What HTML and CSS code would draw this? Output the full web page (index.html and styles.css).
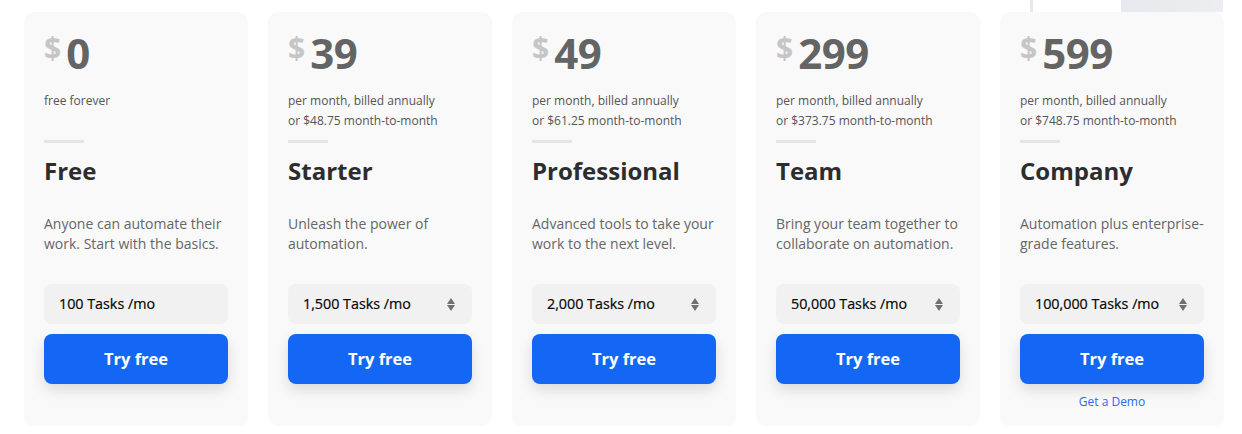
FILE: index.html
```html
<!DOCTYPE html>
<html lang="en">
<head>
<meta charset="utf-8">
<title>Pricing</title>
<link rel="stylesheet" href="styles.css">
</head>
<body>
<div class="page">
  <div class="deco-line"></div>
  <div class="deco-block"></div>
  <div class="plans">
    <div class="card">
      <div class="price"><span class="cur">$</span><span class="amt">0</span></div>
      <div class="billing">free forever</div>
      <div class="rule"></div>
      <h2 class="name">Free</h2>
      <p class="desc">Anyone can automate their work. Start with the basics.</p>
      <div class="select"><span>100 Tasks /mo</span></div>
      <a class="btn">Try free</a>
    </div>
    <div class="card">
      <div class="price"><span class="cur">$</span><span class="amt">39</span></div>
      <div class="billing">per month, billed annually<br>or $48.75 month-to-month</div>
      <div class="rule"></div>
      <h2 class="name">Starter</h2>
      <p class="desc">Unleash the power of automation.</p>
      <div class="select"><span>1,500 Tasks /mo</span><i class="arrows"></i></div>
      <a class="btn">Try free</a>
    </div>
    <div class="card">
      <div class="price"><span class="cur">$</span><span class="amt">49</span></div>
      <div class="billing">per month, billed annually<br>or $61.25 month-to-month</div>
      <div class="rule"></div>
      <h2 class="name">Professional</h2>
      <p class="desc">Advanced tools to take your work to the next level.</p>
      <div class="select"><span>2,000 Tasks /mo</span><i class="arrows"></i></div>
      <a class="btn">Try free</a>
    </div>
    <div class="card">
      <div class="price"><span class="cur">$</span><span class="amt">299</span></div>
      <div class="billing">per month, billed annually<br>or $373.75 month-to-month</div>
      <div class="rule"></div>
      <h2 class="name">Team</h2>
      <p class="desc">Bring your team together to collaborate on automation.</p>
      <div class="select"><span>50,000 Tasks /mo</span><i class="arrows"></i></div>
      <a class="btn">Try free</a>
    </div>
    <div class="card">
      <div class="price"><span class="cur">$</span><span class="amt">599</span></div>
      <div class="billing">per month, billed annually<br>or $748.75 month-to-month</div>
      <div class="rule"></div>
      <h2 class="name">Company</h2>
      <p class="desc">Automation plus enterprise-grade features.</p>
      <div class="select"><span>100,000 Tasks /mo</span><i class="arrows"></i></div>
      <a class="btn">Try free</a>
      <a class="demo">Get a Demo</a>
    </div>
  </div>
</div>
</body>
</html>
```
FILE: styles.css
```css
* { box-sizing: border-box; }
html, body { margin: 0; padding: 0; background: #fff; }
body { font-family: "Open Sans", "Liberation Sans", sans-serif; }

.page { position: relative; width: 1242px; height: 434px; padding: 12px 0 0 24px; }

.deco-line { position: absolute; left: 1030px; top: 0; width: 3px; height: 12px; background: #e8e8e8; }
.deco-block { position: absolute; left: 1121px; top: 0; width: 102px; height: 12px; background: linear-gradient(90deg, #e6e9ed, #eceef1); }

.plans { position: relative; display: grid; grid-template-columns: repeat(5, 224px); gap: 20px; }

.card {
  display: flex; flex-direction: column;
  background: #f9f9f9; border-radius: 10px;
  padding: 20px 20px 16px;
  min-height: 414px;
}

.price { display: flex; align-items: flex-start; height: 42px; }
.cur { font-size: 30px; font-weight: 700; color: #c6c6c6; line-height: 31px; margin-right: 5px; }
.amt { font-size: 42px; font-weight: 700; color: #646464; line-height: 42px; letter-spacing: -0.5px; }

.billing { margin-top: 17px; height: 40px; font-size: 12px; line-height: 19.5px; color: #555; }

.rule { margin-top: 9px; width: 40px; height: 3px; background: #e5e5e5; }

.name { margin: 12px 0 0; font-size: 24px; line-height: 32px; font-weight: 700; color: #2d2d2d; }

.desc { margin: 27px 0 0; height: 40px; font-size: 14px; line-height: 20px; color: #666; }

.select {
  margin-top: 30px; height: 40px; border-radius: 8px; background: #f1f1f1;
  display: flex; align-items: center; justify-content: space-between;
  padding: 0 16px 0 15px;
  font-size: 14.3px; font-weight: 400; color: #050505;
  -webkit-text-stroke: 0.2px #050505;
}
.select span { margin-top: -1px; }
.arrows { position: relative; width: 9px; height: 15px; }
.arrows::before, .arrows::after {
  content: ""; position: absolute; left: 0;
  border-left: 4.5px solid transparent; border-right: 4.5px solid transparent;
}
.arrows::before { top: 1px; border-bottom: 6px solid #707070; }
.arrows::after { bottom: 1px; border-top: 6px solid #707070; }

.btn {
  margin-top: 10px; height: 50px; border-radius: 8px; background: #1467f5;
  display: flex; align-items: center; justify-content: center;
  padding-bottom: 1px;
  color: #fff; font-size: 16.5px; font-weight: 700;
  box-shadow: 0 6px 14px rgba(0, 0, 0, 0.12);
}

.demo { margin-top: 10px; text-align: center; font-size: 12px; line-height: 16px; color: #2f66f0; }
```
